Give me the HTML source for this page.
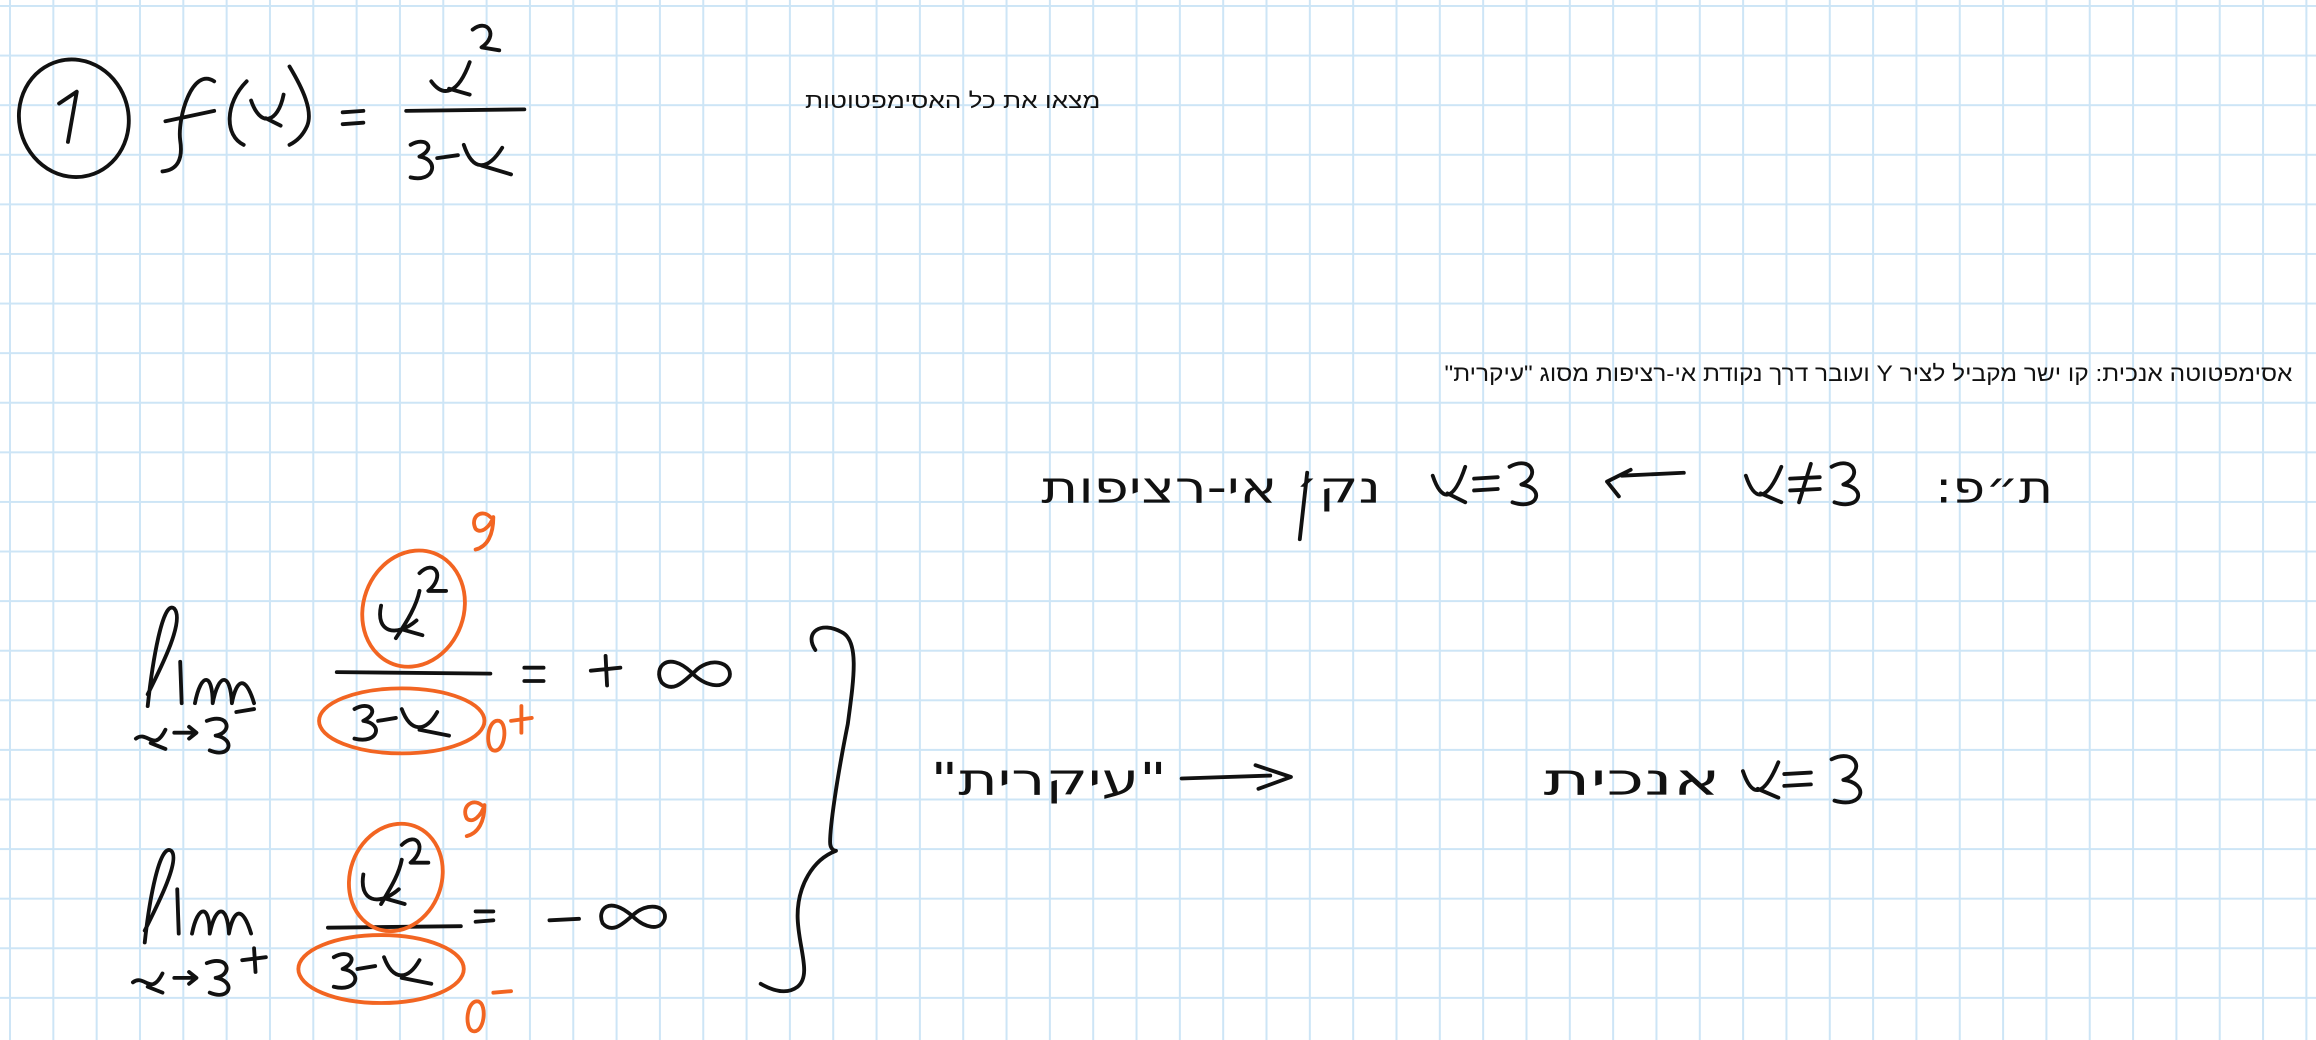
<!DOCTYPE html>
<html><head><meta charset="utf-8"><style>
html,body{margin:0;padding:0}
body{width:2316px;height:1040px;overflow:hidden;background:#fff;
background-image:linear-gradient(to right,#cde5f6 0,#cde5f6 2px,transparent 2px),linear-gradient(to bottom,#cde5f6 0,#cde5f6 2px,transparent 2px);
background-size:43.33px 49.6px;background-position:9px 5px;}
svg{position:absolute;left:0;top:0}
</style></head><body>
<svg width="2316" height="1040" viewBox="0 0 1568 704" xmlns="http://www.w3.org/2000/svg">
<g fill="#111" font-family="Liberation Sans, DejaVu Sans, sans-serif">
<text x="545" y="73" font-size="14.5" text-anchor="end" direction="rtl" textLength="200" lengthAdjust="spacingAndGlyphs">מצאו את כל האסימפטוטות</text>
<text x="978" y="258" font-size="15" text-anchor="end" direction="rtl" textLength="574" lengthAdjust="spacingAndGlyphs">אסימפטוטה אנכית:   קו ישר מקביל לציר Y ועובר דרך נקודת אי-רציפות מסוג "עיקרית"</text>
</g>
<g fill="none" stroke="#111" stroke-width="2.6" stroke-linecap="round" stroke-linejoin="round">
<!-- top formula -->
<ellipse cx="50" cy="80" rx="37" ry="40" transform="rotate(-15 50 80)"/>
<path d="M40 70 L52 62 L46 96"/>
<path d="M145 55 C130 45 120 80 122 95 C124 108 120 115 110 116 M112 82 L145 75"/>
<path d="M167 55 C152 70 152 92 165 98"/>
<path d="M170 68 C176 86 188 84 192 64 M180 80 L190 85"/>
<path d="M196 45 C205 60 212 75 208 85 C205 92 200 96 196 98"/>
<path d="M232 76 L246 75 M232 84 L246 83"/>
<path d="M275 75 L355 74"/>
<path d="M292 55 C300 66 310 64 318 42 M304 60 L318 64"/>
<path d="M320 20 C330 12 338 24 326 32 L338 34"/>
<path d="M278 98 C288 92 296 100 284 106 C298 108 294 124 278 120 M296 107 L310 105 M314 98 C320 116 330 116 340 100 M326 112 L346 118"/>
<!-- lim 1 -->
<path d="M100 470 C110 450 125 420 118 412 C110 405 103 450 100 478 M122 448 L123 476 M132 476 C136 455 144 455 144 476 C148 455 156 455 157 476 C160 460 166 456 172 476"/>
<path d="M92 500 C100 494 104 510 112 494 M102 503 L112 507 M118 496 L132 496 M128 492 L133 496 L128 500 M140 488 C155 482 158 496 146 498 C160 500 156 514 142 508 M160 482 L172 480"/>
<path d="M268 432 C276 420 282 410 284 400 M258 410 C254 428 268 432 282 420 M272 426 L286 430"/>
<path d="M284 388 C294 378 302 390 290 400 L302 400"/>
<path d="M228 455 L332 456"/>
<path d="M240 480 C250 474 258 482 246 488 C260 490 256 504 240 500 M256 488 L268 486 M272 480 C278 496 288 496 296 482 M284 494 L304 498"/>
<path d="M355 452 L368 452 M355 461 L368 461"/>
<path d="M400 454 L420 452 M410 444 L411 464"/>
<path d="M468 455 C452 440 442 452 448 462 C456 470 464 460 470 455 C480 444 496 448 494 458 C490 468 476 464 468 455Z"/>
<!-- lim 2 -->
<path d="M98 630 C108 610 122 582 116 576 C108 570 101 610 98 638 M120 602 L121 632 M130 632 C134 612 142 612 142 632 C146 612 154 612 155 632 C158 616 164 612 170 632"/>
<path d="M90 665 C98 659 102 675 110 659 M100 668 L110 672 M118 662 L132 662 M128 658 L133 662 L128 666 M140 652 C155 646 158 660 146 662 C160 664 156 678 142 672 M164 650 L180 648 M172 642 L173 658"/>
<path d="M258 612 C265 600 270 592 272 582 M246 592 C243 610 256 614 270 602 M260 608 L274 612"/>
<path d="M272 572 C282 562 290 574 278 584 L290 584"/>
<path d="M222 628 L312 627"/>
<path d="M226 648 C236 642 244 650 232 656 C246 658 242 672 226 668 M242 656 L254 654 M260 648 C266 664 276 664 284 650 M272 662 L292 666"/>
<path d="M322 617 L334 617 M322 624 L334 623"/>
<path d="M372 623 L392 622"/>
<path d="M428 620 C412 606 404 616 408 625 C415 633 423 624 428 620 C438 610 452 613 450 622 C447 631 436 628 428 620Z"/>
<!-- brace -->
<path d="M552 440 C544 428 556 420 570 428 C582 434 578 460 574 490 C566 530 562 560 562 570 C562 574 564 576 566 576 C550 582 540 600 540 620 C540 640 550 660 540 668 C532 674 522 670 515 666"/>
<!-- row 1 -->
<path d="M970 322 C976 340 984 340 992 316 M980 334 L992 340 M998 324 L1014 323 M998 332 L1014 331 M1022 316 C1036 308 1044 322 1030 328 C1046 330 1042 346 1024 340"/>
<path d="M1088 326 L1104 318 M1088 326 L1096 336 M1098 322 L1140 320"/>
<path d="M1182 322 C1188 340 1196 340 1206 316 M1192 334 L1206 340 M1212 324 L1232 323 M1212 332 L1232 331 M1226 314 L1218 340 M1240 316 C1254 308 1262 322 1248 328 C1264 330 1260 346 1242 340"/>
<path d="M885 320 L880 365"/>
<!-- row 2 -->
<path d="M800 527 L860 525 M850 518 L874 526 L852 534"/>
<path d="M1180 522 C1186 540 1194 540 1204 516 M1190 534 L1204 540 M1208 524 L1226 523 M1208 532 L1226 531 M1240 514 C1256 506 1264 522 1248 528 C1266 530 1262 548 1242 542"/>
</g>
<g fill="#111" font-family="DejaVu Sans, Liberation Sans, sans-serif">
<text x="705" y="340" font-size="30" direction="rtl" text-anchor="end" textLength="230" lengthAdjust="spacingAndGlyphs">נק׳ אי-רציפות</text>
<text x="1310" y="340" font-size="30" direction="rtl" text-anchor="end" textLength="80" lengthAdjust="spacingAndGlyphs">ת״פ:</text>
<text x="630" y="538" font-size="30" direction="rtl" text-anchor="end" textLength="160" lengthAdjust="spacingAndGlyphs">"עיקרית"</text>
<text x="1045" y="538" font-size="30" direction="rtl" text-anchor="end" textLength="120" lengthAdjust="spacingAndGlyphs">אנכית</text>
</g>
<g fill="none" stroke="#f26522" stroke-width="2.6" stroke-linecap="round" stroke-linejoin="round">
<ellipse cx="280" cy="412" rx="34" ry="40" transform="rotate(20 280 412)"/>
<ellipse cx="272" cy="488" rx="56" ry="22"/>
<path d="M332 350 C326 344 318 350 322 358 C326 362 332 356 334 350 C334 362 330 370 322 372"/>
<path d="M338 488 C330 486 328 506 334 508 C342 510 344 490 338 488 M346 488 L360 486 M353 478 L353 496"/>
<ellipse cx="268" cy="594" rx="31" ry="37" transform="rotate(20 268 594)"/>
<ellipse cx="258" cy="656" rx="56" ry="23"/>
<path d="M326 545 C320 540 312 546 316 554 C320 558 326 552 328 545 C328 556 324 564 316 566"/>
<path d="M324 678 C316 676 314 696 320 698 C328 700 330 680 324 678 M334 672 L346 671"/>
</g>
</svg>
</body></html>
